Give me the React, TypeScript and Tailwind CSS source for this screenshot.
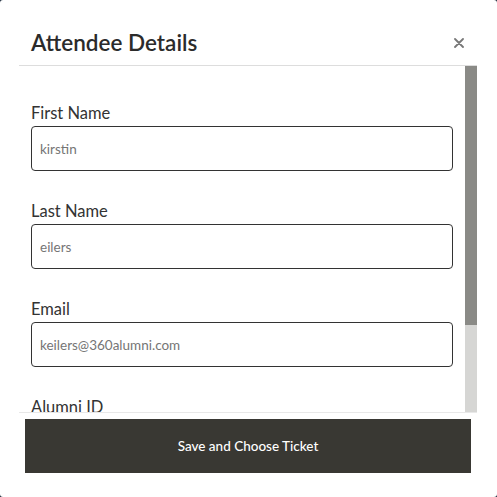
const fields = [
    { label: 'First Name', value: 'kirstin' },
    { label: 'Last Name', value: 'eilers' },
    { label: 'Email', value: 'keilers@360alumni.com' },
    { label: 'Alumni ID', value: '' },
];

export default function App() {
    return (
        <div className="w-[497px] h-[497px] bg-[#1f2d3d]">
            <div
                className="w-full h-full bg-white rounded-[3px] flex flex-col pl-[19px] pr-[20px]"
                style={{ fontFamily: 'Lato, "Open Sans", sans-serif' }}
            >
                <div className="flex items-start justify-between pl-[12px] pr-[13px] pt-[30px] pb-[9px] border-b border-[#dddddd]">
                    <h2 className="text-[22.5px] leading-[26px] font-semibold text-[#2b2b2b]">Attendee Details</h2>
                    <button className="mt-[8px] text-[#777777]">
                        <svg width="10" height="10" viewBox="0 0 10 10">
                            <path d="M1 1L9 9M9 1L1 9" stroke="currentColor" strokeWidth="1.8" strokeLinecap="round" />
                        </svg>
                    </button>
                </div>
                <div className="h-[346px] flex">
                    <div className="flex-1 overflow-hidden">
                        <div className="flex flex-col gap-[28px] px-[12px] pt-[35px] pb-[63px]">
                            {fields.map((f) => (
                                <div key={f.label} className="flex flex-col gap-[1px]">
                                    <label className="text-[16.5px] leading-[24px] text-[#333333]">{f.label}</label>
                                    <input
                                        readOnly
                                        value={f.value}
                                        className="h-[45px] w-full border border-[#333333] rounded-[4px] px-[8px] text-[13.5px] text-[#757575] outline-none"
                                    />
                                </div>
                            ))}
                        </div>
                    </div>
                    {/* scrollbar */}
                    <div className="w-[12px] bg-[#d6d6d4]">
                        <div className="h-[259px] bg-[#8a8a86]" />
                    </div>
                </div>
                <div className="border-t border-[#e8e8e8] px-[6px] pt-[6px]">
                    <button className="w-full h-[54px] bg-[#393833] text-white text-[13.5px] font-medium">
                        Save and Choose Ticket
                    </button>
                </div>
            </div>
        </div>
    );
}
